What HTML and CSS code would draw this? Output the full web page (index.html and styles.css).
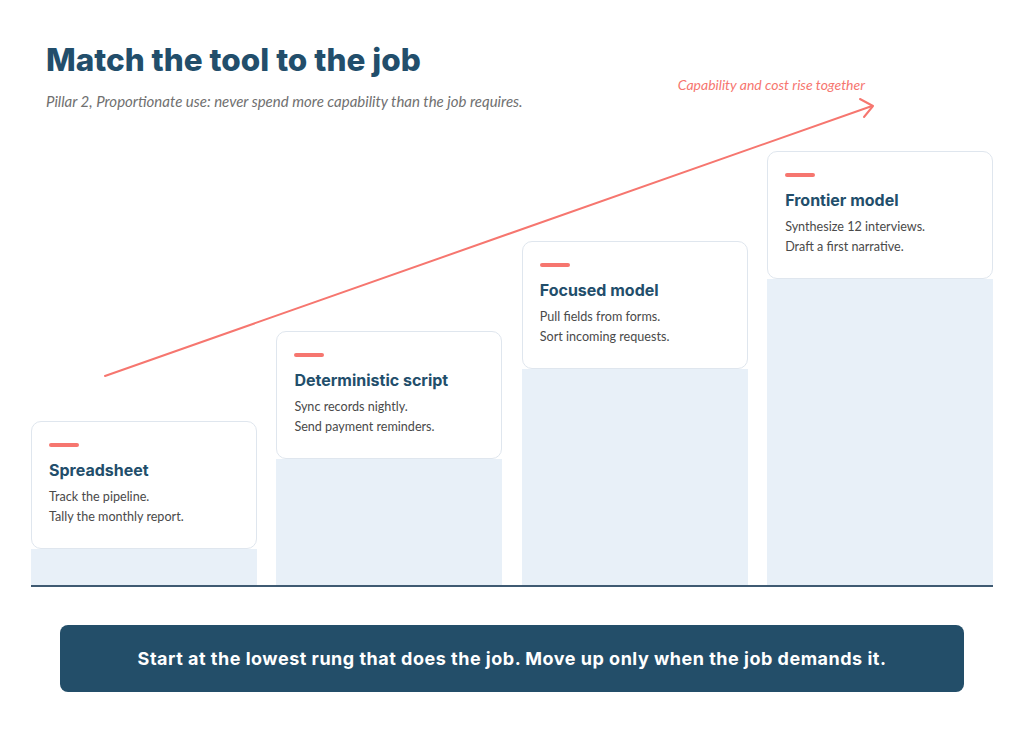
FILE: index.html
```html
<!DOCTYPE html>
<html lang="en">
<head>
<meta charset="utf-8">
<title>Match the tool to the job</title>
<link rel="stylesheet" href="styles.css">
</head>
<body>
<div class="page">
  <header class="header">
    <h1 class="title">Match the tool to the job</h1>
    <p class="subtitle">Pillar 2, Proportionate use: never spend more capability than the job requires.</p>
  </header>

  <section class="chart">
    <div class="col">
      <div class="card">
        <span class="dash"></span>
        <h2 class="card-title">Spreadsheet</h2>
        <p class="card-text">Track the pipeline.<br>Tally the monthly report.</p>
      </div>
      <div class="bar" style="height:36px"></div>
    </div>
    <div class="col">
      <div class="card">
        <span class="dash"></span>
        <h2 class="card-title">Deterministic script</h2>
        <p class="card-text">Sync records nightly.<br>Send payment reminders.</p>
      </div>
      <div class="bar" style="height:126px"></div>
    </div>
    <div class="col">
      <div class="card">
        <span class="dash"></span>
        <h2 class="card-title">Focused model</h2>
        <p class="card-text">Pull fields from forms.<br>Sort incoming requests.</p>
      </div>
      <div class="bar" style="height:216px"></div>
    </div>
    <div class="col">
      <div class="card">
        <span class="dash"></span>
        <h2 class="card-title">Frontier model</h2>
        <p class="card-text">Synthesize 12 interviews.<br>Draft a first narrative.</p>
      </div>
      <div class="bar" style="height:306px"></div>
    </div>
  </section>

  <div class="banner">Start at the lowest rung that does the job. Move up only when the job demands it.</div>

  <svg class="trend" width="1024" height="730" viewBox="0 0 1024 730" aria-hidden="true">
    <line x1="105" y1="376" x2="872" y2="106" stroke="#f6766f" stroke-width="2" stroke-linecap="round"/>
    <polyline points="860,99 873,106 864,117" fill="none" stroke="#f6766f" stroke-width="2" stroke-linecap="round" stroke-linejoin="round"/>
  </svg>
  <span class="trend-label">Capability and cost rise together</span>
</div>
</body>
</html>
```

FILE: styles.css
```css
* { box-sizing: border-box; }

html, body {
  margin: 0;
  padding: 0;
  background: #ffffff;
}

body {
  font-family: "Lato", "Noto Sans", "Liberation Sans", sans-serif;
  color: #4a4a4a;
}

.page {
  position: relative;
  width: 1024px;
  height: 730px;
  padding: 40px 31px 0;
  overflow: hidden;
}

.header {
  padding-left: 15px;
}

.title {
  margin: 0;
  font-family: "Inter", "Open Sans", sans-serif;
  font-weight: 800;
  font-size: 31.5px;
  line-height: 40px;
  letter-spacing: 0;
  color: #224e6b;
}

.subtitle {
  margin: 11px 0 0;
  font-style: italic;
  font-size: 15px;
  line-height: 20px;
  color: #707070;
}

.chart {
  display: grid;
  grid-template-columns: repeat(4, 1fr);
  column-gap: 19.5px;
  align-items: end;
  height: 476px;
  border-bottom: 2px solid #3f5a72;
}

.col {
  display: flex;
  flex-direction: column;
}

.card {
  height: 128px;
  padding: 21px 17px 0;
  background: #ffffff;
  border: 1.5px solid #dfe6ee;
  border-radius: 10px;
}

.dash {
  display: block;
  width: 30px;
  height: 4px;
  border-radius: 2px;
  background: #f6766f;
}

.card-title {
  margin: 12px 0 0;
  font-family: "Inter", "Open Sans", sans-serif;
  font-weight: 700;
  font-size: 16px;
  line-height: 22px;
  color: #224e6b;
}

.card-text {
  margin: 6px 0 0;
  font-size: 12.6px;
  line-height: 20px;
  color: #4a4a4a;
}

.bar {
  background: #e8f0f8;
}

.banner {
  margin: 38px 29px 0;
  height: 67px;
  border-radius: 8px;
  background: #234e69;
  color: #ffffff;
  display: flex;
  align-items: center;
  justify-content: center;
  font-family: "Inter", "Open Sans", sans-serif;
  font-weight: 700;
  font-size: 18px;
  letter-spacing: 0.5px;
}

.trend {
  position: absolute;
  left: 0;
  top: 0;
  pointer-events: none;
}

.trend-label {
  position: absolute;
  right: 159px;
  top: 76px;
  font-style: italic;
  font-size: 14px;
  line-height: 18px;
  color: #f6766f;
}
```
